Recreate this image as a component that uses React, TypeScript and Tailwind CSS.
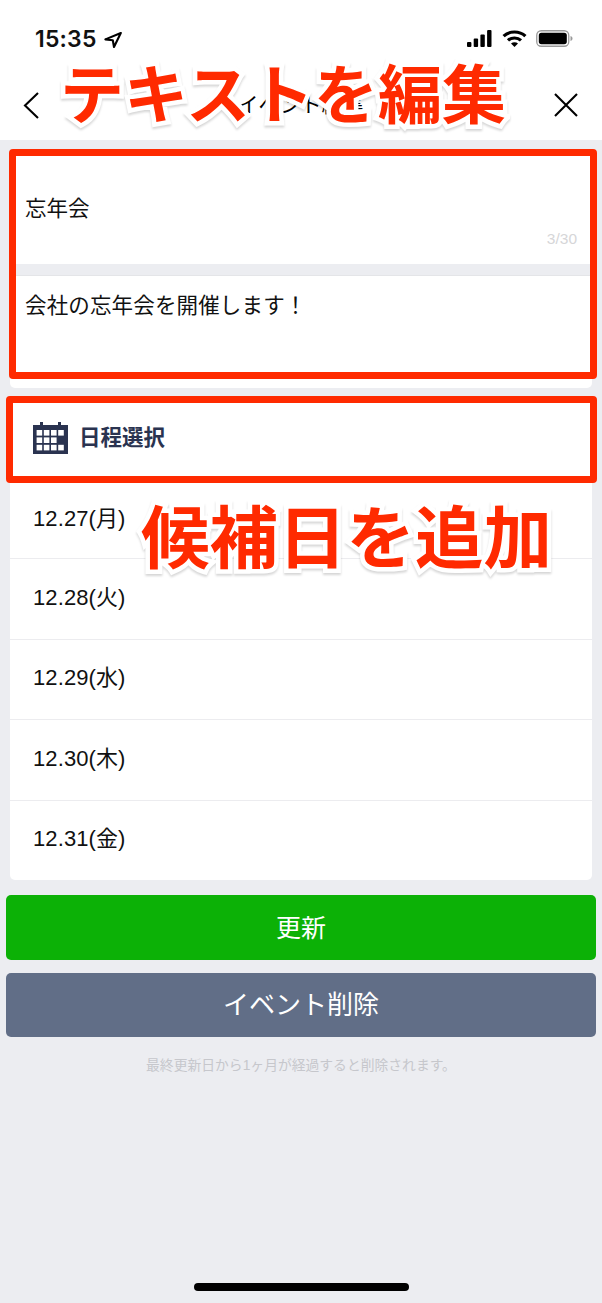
const DATES = ["12.27(月)", "12.28(火)", "12.29(水)", "12.30(木)", "12.31(金)"];

function CalendarIcon() {
  const cells: [number, number][] = [];
  for (let r = 0; r < 3; r++) {
    for (let c = 0; c < 4; c++) cells.push([c, r]);
  }
  return (
    <svg width="35" height="32" viewBox="0 0 35 32" className="shrink-0">
      <rect x="0" y="3" width="35" height="29" fill="#2a3350" />
      <rect x="7" y="0" width="3" height="5" fill="#2a3350" />
      <rect x="25" y="0" width="3" height="5" fill="#2a3350" />
      {cells
        .filter(([c, r]) => !(c === 3 && r === 1))
        .map(([c, r]) => (
          <rect key={`${c}-${r}`} x={3.6 + c * 7.2} y={8 + r * 7.4} width="5.6" height="5.6" fill="#ffffff" />
        ))}
    </svg>
  );
}

function StatusIcons() {
  return (
    <div className="flex items-center">
      <svg width="25" height="17" viewBox="0 0 25 17" className="mr-[10px]">
        <rect x="0" y="12" width="4.4" height="5" rx="1" fill="#000" />
        <rect x="6.7" y="8.5" width="4.4" height="8.5" rx="1" fill="#000" />
        <rect x="13.4" y="4.5" width="4.4" height="12.5" rx="1" fill="#000" />
        <rect x="20.1" y="0" width="4.4" height="17" rx="1" fill="#000" />
      </svg>
      <svg width="25" height="17" viewBox="0 0 25 17" fill="none" stroke="#000" strokeWidth="3.2" className="mr-[9px]">
        <path d="M1.6 6.2 C7.5 0.6 17.5 0.6 23.4 6.2" />
        <path d="M6 10.4 C9.5 7.2 15.5 7.2 19 10.4" />
        <path d="M12.5 17 L9 13.4 C11 11.8 14 11.8 16 13.4 Z" fill="#000" stroke="none" />
      </svg>
      <svg width="37" height="17" viewBox="0 0 37 17">
        <rect x="0.75" y="0.75" width="32" height="15.5" rx="4.5" fill="none" stroke="#9a9a9a" strokeWidth="1.3" />
        <rect x="2.8" y="2.8" width="28" height="11.4" rx="2.6" fill="#000" />
        <path d="M34.5 6 C36 6.4 36.5 7.4 36.5 8.5 C36.5 9.6 36 10.6 34.5 11 Z" fill="#9a9a9a" />
      </svg>
    </div>
  );
}

const CAPTION =
  "absolute font-bold text-[#ff2a00] whitespace-nowrap leading-none [font-family:'Noto_Sans_CJK_JP',sans-serif] [-webkit-text-stroke:9px_#ffffff] [paint-order:stroke_fill] drop-shadow-[0_2px_1px_rgba(0,0,0,0.16)]";

export default function App() {
  return (
    <div className="relative h-[1303px] w-[602px] overflow-hidden bg-[#ecedf1] text-[#111] [font-family:'Liberation_Sans','Noto_Sans_CJK_JP',sans-serif]">
      <header className="h-[140px] bg-white">
        <div className="flex h-[76px] items-start justify-between pl-[35px] pr-[29px] pt-[25px]">
          <div className="flex items-center gap-[7px] pt-[1px]">
            <span className="text-[23px] leading-[27px] font-semibold tracking-[0.2px] [font-family:Inter,sans-serif]">15:35</span>
            <svg width="18" height="16" viewBox="0 0 18 16" fill="none" stroke="#000" strokeWidth="2.1" strokeLinejoin="round">
              <path d="M16.8 1 L1.4 7.4 L8.8 8.2 L10 15 Z" />
            </svg>
          </div>
          <div className="pt-[5px]">
            <StatusIcons />
          </div>
        </div>
        <div className="flex h-[60px] items-center justify-between pb-[2px] pl-[23px] pr-[24px]">
          <div className="w-[24px]">
            <svg width="16" height="27" viewBox="0 0 16 27" fill="none" stroke="#000" strokeWidth="2.1">
              <path d="M15 1 L2 13.5 L15 26" />
            </svg>
          </div>
          <h1 className="text-[21px] font-normal text-black">イベント編集</h1>
          <div className="w-[24px]">
            <svg width="24" height="24" viewBox="0 0 24 24" fill="none" stroke="#000" strokeWidth="2.1">
              <path d="M1 1 L23 23 M23 1 L1 23" />
            </svg>
          </div>
        </div>
      </header>

      <main className="flex flex-col px-[10px] pt-[10px]">
        <section className="relative flex h-[114px] items-center rounded-t-[5px] bg-white px-[15px] pt-[5px]">
          <p className="text-[21.5px]">忘年会</p>
          <span className="absolute bottom-[14px] right-[15px] text-[15.5px] text-[#d6d6d8]">3/30</span>
        </section>
        <section className="mt-[11px] h-[113px] rounded-b-[5px] border-t border-[#e4e5e8] bg-white px-[15px] pt-[14px]">
          <p className="text-[21.5px] leading-[32px] tracking-[0.15px]">会社の忘年会を開催します！</p>
        </section>

        <section className="mt-[8px] rounded-[5px] bg-white">
          <div className="flex h-[82px] items-center gap-[11px] pl-[23px] pt-[2px]">
            <CalendarIcon />
            <h2 className="text-[21.5px] font-bold text-[#2a3350]">日程選択</h2>
          </div>
          {DATES.map((d, i) => (
            <div
              key={d}
              className={`flex h-[80.4px] items-center pl-[23px] text-[22px] tracking-[0.1px] ${i > 0 ? "border-t border-[#ececef] pb-[3px]" : "pt-[1px]"}`}
            >
              {d}
            </div>
          ))}
        </section>

        <div className="-mx-[4px] mt-[15px] flex flex-col gap-[13px]">
          <button className="h-[65px] rounded-[5px] bg-[#0cb106] pt-[2px] text-[25px] text-white">更新</button>
          <button className="h-[64px] rounded-[5px] bg-[#616e87] pt-[2px] text-[26px] text-white">イベント削除</button>
        </div>
        <p className="mt-[19px] text-center text-[13.8px] text-[#c6c7cc]">最終更新日から1ヶ月が経過すると削除されます。</p>
      </main>

      <div className="absolute left-[9px] top-[149px] h-[230px] w-[588px] rounded-[4px] border-[7px] border-[#ff2a00]" />
      <div className="absolute left-[6px] top-[396px] h-[87px] w-[591px] rounded-[4px] border-[7px] border-[#ff2a00]" />

      <span className={`${CAPTION} left-[60px] top-[58px] text-[64px]`}>テキストを編集</span>
      <span className={`${CAPTION} left-[141px] top-[500px] text-[68.5px]`}>候補日を追加</span>

      <div className="absolute bottom-[12px] left-[194px] h-[8px] w-[215px] rounded-full bg-black" />
    </div>
  );
}
